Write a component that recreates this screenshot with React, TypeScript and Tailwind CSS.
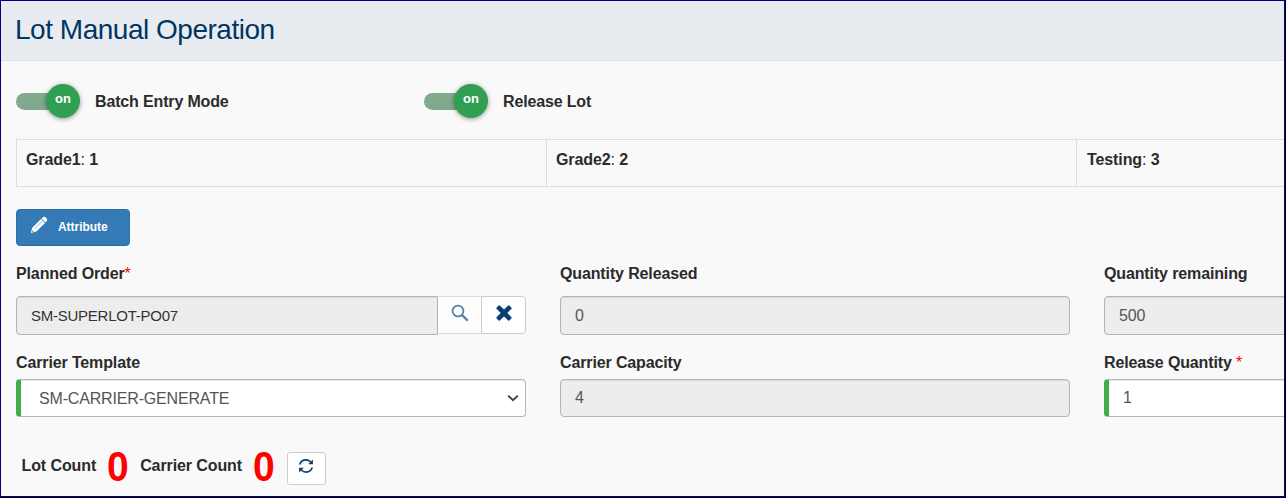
import React from "react";

function Toggle({ label }: { label: string }) {
  return (
    <div className="flex h-[34px] w-[408px] items-center">
      <div className="flex h-[17px] w-[64px] shrink-0 items-center justify-end rounded-full bg-gradient-to-r from-[#80a98e] from-90% to-transparent to-90%">
        <div className="flex size-[34px] shrink-0 items-center justify-center rounded-full bg-[#319f52] pb-[5px] text-[13px] font-bold leading-none text-white shadow-[0_1px_5px_rgba(0,0,0,0.4)]">
          on
        </div>
      </div>
      <span className="ml-[15px] mt-[2px] font-bold tracking-[-0.15px]">{label}</span>
    </div>
  );
}

function Cell({ name, value }: { name: string; value: string }) {
  return (
    <div className="h-[48px] w-[530px] shrink-0 border-y border-l border-[#dddddd] pl-[9px] pt-[9px] leading-[22px] tracking-[-0.1px] last:pl-[10px]">
      <b>{name}</b>: <b>{value}</b>
    </div>
  );
}

function Label({ children, star }: { children: React.ReactNode; star?: boolean }) {
  return (
    <div className="h-[22px] whitespace-pre pt-px font-bold leading-[22px] tracking-[-0.13px]">
      {children}
      {star && <span className="font-normal text-[#f00]">*</span>}
    </div>
  );
}

function Disabled({ value, className }: { value: string; className: string }) {
  return (
    <input
      readOnly
      value={value}
      className={
        "block w-[510px] rounded-[4px] border border-[#b5b5b5] bg-[#ededed] pl-[14px] text-[16px] tracking-[-0.1px] text-[#555555] shadow-[inset_0_1px_1px_rgba(0,0,0,0.09)] outline-none " +
        className
      }
    />
  );
}

function Pencil() {
  return (
    <svg width="18" height="18" viewBox="0 0 18 18" fill="white">
      <path d="M12.2 1.8 Q14 0 15.6 1.2 L16.8 2.4 Q18 4 16.2 5.8 L15.6 6.4 L11.6 2.4Z" />
      <path d="M11 3 L15 7 L6.4 15.6 L.8 17 L2.3 11.7Z" />
      <path d="M4.6 12.8 L12 5.4" stroke="#5f98c9" strokeWidth=".8" />
      <path d="M2.5 14.2 L3.8 15.5 L2 16Z" fill="#337ab7" />
    </svg>
  );
}

function Refresh() {
  return (
    <svg width="16" height="16" viewBox="0 0 16 16" fill="none" stroke="#0c3d6b" strokeWidth="1.6">
      <path d="M1.7 6.4 C2.7 3.6 5 1.9 7.8 1.9 C9.7 1.9 11.4 2.6 12.8 4" />
      <path d="M14.3 9.6 C13.3 12.4 11 14.1 8.2 14.1 C6.3 14.1 4.6 13.4 3.2 12" />
      <path d="M14.9 1.4 V6.2 H10.2Z M1.1 14.6 V9.8 H5.8Z" fill="#0c3d6b" stroke="none" />
    </svg>
  );
}

function Count({ label, value }: { label: string; value: string }) {
  return (
    <div className="flex items-center">
      <span className="mb-[6px] tracking-[-0.1px]">{label}</span>
      <span className="ml-[11px] mt-[-4px] w-[24px] origin-left scale-x-[0.93] text-[42px] leading-[33px] text-[#f00]">
        {value}
      </span>
    </div>
  );
}

export default function App() {
  return (
    <div className="h-[498px] w-[1286px] overflow-hidden border-b border-r border-black font-['Liberation_Sans',Arial,sans-serif] text-[16px] text-[#2b2b2b]">
      <div className="flex h-[497px] w-[1285px] flex-col overflow-hidden border border-[#000080] bg-[#f9f9f9]">
        <header className="flex h-[60px] shrink-0 items-center border-b border-[#dbe0e6] bg-[#e8ecf1] pb-px pl-[14px]">
          <h1 className="text-[28px] leading-[32px] tracking-[-0.48px] text-[#003663]">Lot Manual Operation</h1>
        </header>
        <main className="flex w-[1700px] flex-col pl-[15px]">
          <div className="mt-[23px] flex">
            <Toggle label="Batch Entry Mode" />
            <Toggle label="Release Lot" />
          </div>
          <div className="mt-[21px] flex">
            <Cell name="Grade1" value="1" />
            <Cell name="Grade2" value="2" />
            <Cell name="Testing" value="3" />
          </div>
          <button className="mt-[22px] flex h-[37px] w-[114px] items-center rounded-[4px] border border-[#2e6da4] bg-[#337ab7] pl-[13px] text-[12px] font-bold text-white">
            <span className="-mt-[5px]"><Pencil /></span>
            <span className="-mt-px ml-[10px] leading-[16px] tracking-[-0.05px]">Attribute</span>
          </button>
          <div className="mt-[16px] flex gap-[34px]">
            <div>
              <Label star>Planned Order</Label>
              <div className="mt-[12px] flex w-[510px] items-start">
                <input
                  readOnly
                  value="SM-SUPERLOT-PO07"
                  className="h-[39px] w-[422px] rounded-l-[4px] border border-[#b5b5b5] bg-[#ededed] pl-[14px] text-[15px] tracking-[-0.25px] text-[#333333] shadow-[inset_0_1px_1px_rgba(0,0,0,0.09)] outline-none"
                />
                <button className="flex h-[38px] w-[43px] items-center justify-center border-y border-[#dddddd] bg-[#fdfdfd] pb-[4px]">
                  <svg width="18" height="18" viewBox="0 0 18 18" fill="none" stroke="#587fa8">
                    <circle cx="7" cy="7" r="5.4" strokeWidth="1.8" />
                    <path d="M10.9 10.9 L16.7 16.7" strokeWidth="2.3" />
                  </svg>
                </button>
                <button className="flex h-[38px] w-[45px] items-center justify-center rounded-r-[4px] border border-[#cccccc] bg-white pb-[4px]">
                  <svg width="18" height="18" viewBox="0 0 18 18" fill="#083c72">
                    <path d="M1.1 4.2 L4.2 1.1 L9 5.6 L13.8 1.1 L16.9 4.2 L12.3 9 L16.9 13.8 L13.8 16.9 L9 12.4 L4.2 16.9 L1.1 13.8 L5.7 9Z" />
                  </svg>
                </button>
              </div>
            </div>
            <div>
              <Label>Quantity Released</Label>
              <Disabled value="0" className="mt-[12px] h-[39px]" />
            </div>
            <div>
              <Label>Quantity remaining</Label>
              <Disabled value="500" className="mt-[12px] h-[39px]" />
            </div>
          </div>
          <div className="mt-[16px] flex gap-[34px]">
            <div>
              <Label>Carrier Template</Label>
              <div className="mt-[6px] flex h-[38px] w-[510px] items-center justify-between rounded-[4px] border border-l-[5px] border-[#b5b5b5] border-l-[#43ab49] bg-white pl-[18px] pr-[6px] text-[#555555] shadow-[inset_0_1px_1px_rgba(0,0,0,0.09)]">
                <span className="mt-[2px] tracking-[-0.17px]">SM-CARRIER-GENERATE</span>
                <svg width="12" height="8" viewBox="0 0 12 8" fill="none" stroke="#444" strokeWidth="2">
                  <path d="M1.2 1.6 L6 6.2 L10.8 1.6" />
                </svg>
              </div>
            </div>
            <div>
              <Label>Carrier Capacity</Label>
              <Disabled value="4" className="mt-[6px] h-[38px]" />
            </div>
            <div>
              <Label star>{"Release Quantity "}</Label>
              <input
                readOnly
                value="1"
                className="mt-[6px] block h-[38px] w-[510px] rounded-[4px] border border-l-[5px] border-[#b5b5b5] border-l-[#43ab49] bg-white pl-[14px] text-[#555555] shadow-[inset_0_1px_1px_rgba(0,0,0,0.09)] outline-none"
              />
            </div>
          </div>
          <div className="mt-[35px] flex h-[33px] items-center gap-[9px] pl-[5.5px] font-bold">
            <Count label="Lot Count" value="0" />
            <Count label="Carrier Count" value="0" />
            <button className="ml-px flex h-[33px] w-[39px] items-center justify-center rounded-[3px] border border-[#cccccc] bg-white pb-[5px]">
              <Refresh />
            </button>
          </div>
        </main>
      </div>
    </div>
  );
}
